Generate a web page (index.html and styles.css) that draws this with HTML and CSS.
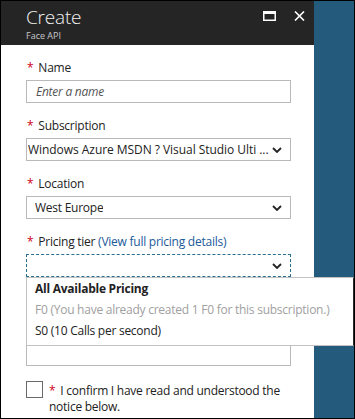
FILE: index.html
```html
<!DOCTYPE html>
<html lang="en">
<head>
<meta charset="utf-8">
<title>Create - Face API</title>
<link rel="stylesheet" href="styles.css">
</head>
<body>
<div class="frame">
  <div class="blade">
    <div class="header">
      <div class="titles">
        <div class="title">Create</div>
        <div class="subtitle">Face API</div>
      </div>
      <div class="actions">
        <svg class="icon-max" width="13" height="10" viewBox="0 0 13 10"><rect x="0.75" y="0.75" width="11.5" height="8.5" fill="none" stroke="#fff" stroke-width="1.5"/><rect x="0" y="0" width="13" height="3" fill="#fff"/></svg>
        <svg class="icon-close" width="11" height="10" viewBox="0 0 11 10"><path d="M1 0.5 L10 9.5 M10 0.5 L1 9.5" stroke="#fff" stroke-width="1.6" fill="none"/></svg>
      </div>
    </div>
    <div class="form">
      <div class="field">
        <div class="label required">Name</div>
        <div class="box placeholder">Enter a name</div>
      </div>
      <div class="field">
        <div class="label required">Subscription</div>
        <div class="box select tight"><span class="val">Windows Azure MSDN ? Visual Studio Ulti ...</span><svg class="chev" width="10" height="6" viewBox="0 0 10 6"><path d="M1 1 L5 5 L9 1" stroke="#222" stroke-width="1.8" fill="none"/></svg></div>
      </div>
      <div class="field">
        <div class="label required">Location</div>
        <div class="box select"><span class="val">West Europe</span><svg class="chev" width="10" height="6" viewBox="0 0 10 6"><path d="M1 1 L5 5 L9 1" stroke="#222" stroke-width="1.8" fill="none"/></svg></div>
      </div>
      <div class="field pricing">
        <div class="label required">Pricing tier <span class="link">(View full pricing details)</span></div>
        <div class="box select focus"><span class="val"></span><svg class="chev" width="10" height="6" viewBox="0 0 10 6"><path d="M1 1 L5 5 L9 1" stroke="#222" stroke-width="1.8" fill="none"/></svg></div>
        <div class="dropdown">
          <div class="opt head">All Available Pricing</div>
          <div class="opt disabled">F0 (You have already created 1 F0 for this subscription.)</div>
          <div class="opt">S0 (10 Calls per second)</div>
        </div>
      </div>
      <div class="field covered">
        <div class="box"></div>
      </div>
      <div class="confirm">
        <div class="checkbox"></div>
        <div class="confirm-text required">I confirm I have read and understood the notice below.</div>
      </div>
    </div>
  </div>
  <div class="side"></div>
</div>
</body>
</html>
```
FILE: styles.css
```css
html, body {
  margin: 0;
  padding: 0;
  background: #fff;
}

.frame {
  width: 355px;
  height: 419px;
  box-sizing: border-box;
  border: 1px solid #000;
  display: flex;
  overflow: hidden;
  font-family: "Open Sans", "Noto Sans", sans-serif;
  font-size: 12px;
  color: #222;
}

.blade {
  width: 313px;
  flex: none;
  background: #fff;
  display: flex;
  flex-direction: column;
}

.side {
  flex: 1;
  background: #245b7d;
}

.header {
  height: 44px;
  background: #252526;
  display: flex;
  justify-content: space-between;
  align-items: flex-start;
  padding-left: 25px;
  padding-right: 9px;
}

.titles {
  padding-top: 3px;
}

.title {
  font-size: 19px;
  line-height: 26px;
  font-weight: 300;
  color: #f2f2f2;
  letter-spacing: -0.2px;
}

.subtitle {
  font-size: 9px;
  line-height: 12px;
  color: #c8c8c8;
}

.actions {
  display: flex;
  align-items: flex-start;
  gap: 18px;
  padding-top: 10px;
}

.form {
  position: relative;
  padding: 15px 23px 0 25px;
  letter-spacing: -0.25px;
}

.field {
  margin-bottom: 15px;
}

.pricing {
  position: relative;
}

.label {
  line-height: 16px;
  height: 16px;
  margin-bottom: 4px;
  white-space: nowrap;
}

.required::before {
  content: "*";
  color: #d0021b;
  margin-left: 1px;
  margin-right: 5px;
}

.confirm-text.required::before {
  margin-left: 0;
}

.link {
  color: #1a5a9a;
}

.box {
  height: 23px;
  box-sizing: border-box;
  border: 1px solid #b9b9b9;
  line-height: 21px;
  padding: 0 8px 0 9px;
  background: #fff;
}

.placeholder {
  font-style: italic;
  color: #555;
}

.select {
  display: flex;
  align-items: center;
  justify-content: space-between;
  padding-left: 8px;
}

.select.tight {
  padding-left: 1px;
  letter-spacing: -0.05px;
}

.val {
  white-space: nowrap;
  overflow: hidden;
}

.chev {
  flex: none;
}

.focus {
  border: 1px dashed #2a6f92;
}

.dropdown {
  position: absolute;
  top: 100%;
  left: 0;
  width: 328px;
  box-sizing: border-box;
  background: #fff;
  border: 1px solid #c2c2c2;
  border-right: 1px solid #2a2a2a;
  padding: 0 0 4px 8px;
  z-index: 2;
}

.opt {
  line-height: 21px;
  white-space: nowrap;
}

.opt.head {
  font-weight: 700;
}

.opt.disabled {
  color: #a0a0a0;
}

.covered {
  padding-top: 51px;
}

.confirm {
  display: flex;
  align-items: flex-start;
  gap: 6px;
  margin-top: 1px;
}

.checkbox {
  width: 17px;
  height: 17px;
  box-sizing: border-box;
  border: 1px solid #6a6a6a;
  flex: none;
}

.confirm-text {
  width: 242px;
  line-height: 16px;
  margin-top: 2px;
}
```
